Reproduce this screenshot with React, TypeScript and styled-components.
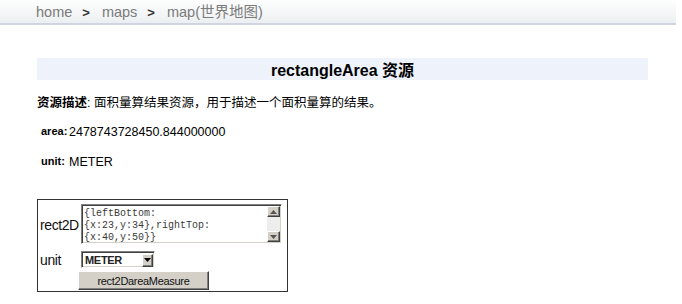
import { FC } from "react";
import styled, { createGlobalStyle } from "styled-components";

const GlobalStyle = createGlobalStyle`
  body {
    margin: 0;
    background: #ffffff;
    font-family: "Liberation Sans", Arial, "Noto Sans CJK SC", sans-serif;
    color: #000000;
  }
`;

const Breadcrumb = styled.div`
  width: 640px;
  height: 23px;
  padding-left: 36px;
  display: flex;
  align-items: center;
  background: linear-gradient(#fefefe, #eceff1);
  border-bottom: 2px solid #d0d4e0;
  font-size: 14.5px;
  color: #7b7b7b;
`;

const Crumb = styled.span`
  line-height: 23px;
  padding-top: 2px;
`;

const Sep = styled.span`
  margin: 1px 12px 0 10px;
  font-size: 13px;
  font-weight: 700;
  color: #333333;
`;

const Content = styled.div`
  width: 611px;
  padding: 0 34px 0 37px;
`;

const TitleBand = styled.div`
  margin-top: 33px;
  height: 22px;
  display: flex;
  align-items: center;
  justify-content: center;
  background: #eef3fb;
  font-size: 16px;
  font-weight: 700;
`;

const Line = styled.div`
  height: 30px;
  display: flex;
  align-items: center;
`;

const Desc = styled(Line)`
  margin-top: 6px;
  font-size: 12.5px;
`;

const Strong = styled.b`
  font-weight: 700;
`;

const PropLabel = styled.span`
  width: 28px;
  padding-left: 4px;
  font-size: 11px;
  font-weight: 700;
`;

const PropValue = styled.span`
  font-size: 12.5px;
  padding-top: 1px;
`;

const FormBox = styled.div`
  margin-top: 23px;
  width: 244px;
  padding: 4px 5px 1px 0;
  border: 1px solid #333333;
`;

const FormRow = styled.div<{ $gap?: number }>`
  display: flex;
  align-items: center;
  margin-top: ${(p) => p.$gap ?? 0}px;
`;

const FieldLabel = styled.span`
  width: 41px;
  padding: 2px 0 0 2px;
  font-size: 14px;
  letter-spacing: -0.4px;
  color: #111111;
`;

const Sunken = styled.div`
  display: flex;
  box-sizing: border-box;
  border-style: solid;
  border-width: 1px;
  border-color: #808080 #ffffff #ffffff #808080;
  box-shadow: inset 1px 1px #404040, inset -1px -1px #d4d0c8;
  background: #ffffff;
`;

const TextBox = styled(Sunken)`
  width: 201px;
  height: 40px;
  padding: 1px;
`;

const TextArea = styled.textarea`
  flex: 1;
  margin: 0;
  padding: 2px 0 0 1px;
  border: none;
  outline: none;
  resize: none;
  overflow: hidden;
  background: transparent;
  font-family: "Liberation Mono", "Courier New", monospace;
  font-size: 10px;
  line-height: 12px;
  color: #3a3a3a;
`;

const ScrollBar = styled.div`
  width: 13px;
  display: flex;
  flex-direction: column;
  background: #ededeb;
`;

const Track = styled.div`
  flex: 1;
`;

const ArrowButton = styled.div<{ $h: number; $w?: number }>`
  height: ${(p) => p.$h}px;
  width: ${(p) => (p.$w ? `${p.$w}px` : "auto")};
  display: flex;
  align-items: center;
  justify-content: center;
  box-sizing: border-box;
  background: #d4d0c8;
  border-style: solid;
  border-width: 1px;
  border-color: #ffffff #404040 #404040 #ffffff;
  box-shadow: inset -1px -1px #808080;
`;

const SelectBox = styled(Sunken)`
  width: 74px;
  height: 17px;
  padding: 2px 1px 1px 2px;
  align-items: stretch;
`;

const Select = styled.select`
  flex: 1;
  min-width: 0;
  margin: 0;
  padding: 0 0 0 1px;
  border: none;
  outline: none;
  appearance: none;
  background: transparent;
  font-family: "Liberation Sans", Arial, sans-serif;
  font-size: 11px;
  font-weight: 700;
  letter-spacing: -0.3px;
  color: #222222;
`;

const PushButton = styled.button`
  width: 131px;
  height: 19px;
  margin: 0 0 0 40px;
  padding: 0;
  background: #d4d0c8;
  border-style: solid;
  border-width: 1px;
  border-color: #ffffff #404040 #404040 #ffffff;
  box-shadow: inset -1px -1px #808080;
  font-family: "Liberation Sans", Arial, sans-serif;
  font-size: 11px;
  letter-spacing: -0.3px;
  color: #111111;
`;

const Triangle: FC<{ down?: boolean; color?: string }> = ({ down, color = "#000" }) => (
  <svg width="7" height="4" viewBox="0 0 7 4">
    <polygon points={down ? "0,0 7,0 3.5,4" : "0,4 7,4 3.5,0"} fill={color} />
  </svg>
);

const App: FC = () => {
  return (
    <>
      <GlobalStyle />
      <Breadcrumb>
        <Crumb>home</Crumb>
        <Sep>&gt;</Sep>
        <Crumb>maps</Crumb>
        <Sep>&gt;</Sep>
        <Crumb>map(世界地图)</Crumb>
      </Breadcrumb>
      <Content>
        <TitleBand>rectangleArea 资源</TitleBand>
        <Desc>
          <Strong>资源描述</Strong>: 面积量算结果资源，用于描述一个面积量算的结果。
        </Desc>
        <Line>
          <PropLabel>area:</PropLabel>
          <PropValue>2478743728450.844000000</PropValue>
        </Line>
        <Line>
          <PropLabel>unit:</PropLabel>
          <PropValue>METER</PropValue>
        </Line>
        <FormBox>
          <FormRow>
            <FieldLabel>rect2D</FieldLabel>
            <TextBox>
              <TextArea
                readOnly
                defaultValue={"{leftBottom:\n{x:23,y:34},rightTop:\n{x:40,y:50}}"}
              />
              <ScrollBar>
                <ArrowButton $h={11}>
                  <Triangle color="#555" />
                </ArrowButton>
                <Track />
                <ArrowButton $h={11}>
                  <Triangle down color="#555" />
                </ArrowButton>
              </ScrollBar>
            </TextBox>
          </FormRow>
          <FormRow $gap={6}>
            <FieldLabel>unit</FieldLabel>
            <SelectBox>
              <Select defaultValue="METER">
                <option>METER</option>
                <option>KILOMETER</option>
                <option>DEGREE</option>
              </Select>
              <ArrowButton $h={13} $w={11}>
                <Triangle down />
              </ArrowButton>
            </SelectBox>
          </FormRow>
          <FormRow $gap={3}>
            <PushButton>rect2DareaMeasure</PushButton>
          </FormRow>
        </FormBox>
      </Content>
    </>
  );
};

export default App;
